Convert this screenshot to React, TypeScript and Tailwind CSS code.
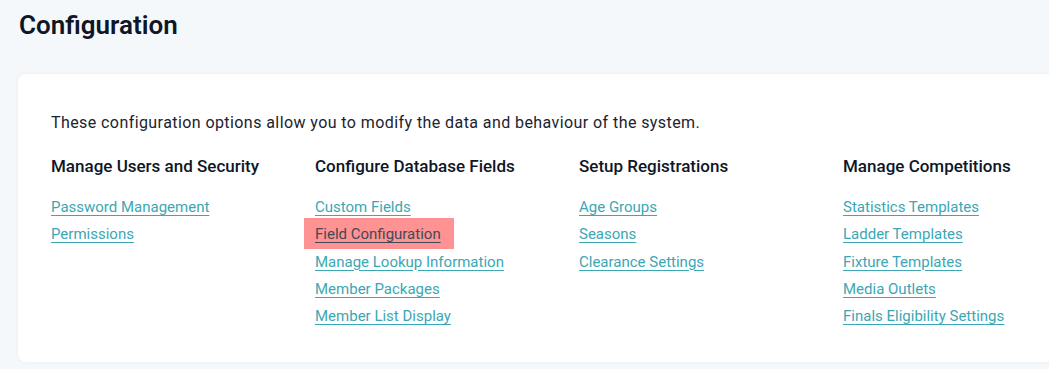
const columns = [
  {
    title: "Manage Users and Security",
    links: ["Password Management", "Permissions"],
  },
  {
    title: "Configure Database Fields",
    links: [
      "Custom Fields",
      "Field Configuration",
      "Manage Lookup Information",
      "Member Packages",
      "Member List Display",
    ],
  },
  {
    title: "Setup Registrations",
    links: ["Age Groups", "Seasons", "Clearance Settings"],
  },
  {
    title: "Manage Competitions",
    links: [
      "Statistics Templates",
      "Ladder Templates",
      "Fixture Templates",
      "Media Outlets",
      "Finals Eligibility Settings",
    ],
  },
];

export default function App() {
  return (
    <div className="h-[369px] w-[1049px] overflow-hidden bg-[#f5f8fb] font-['Roboto',sans-serif]">
      <h1 className="px-[19px] pt-[10px] text-[26px] font-semibold leading-[30px] text-[#0e1627]">
        Configuration
      </h1>
      <div className="ml-[18px] mt-[34px] w-[1060px] rounded-lg bg-white pb-[31px] pl-[33px] pt-[39px] shadow-[0_0_4px_rgba(30,60,90,0.05)]">
        <p className="text-[16px] leading-[20px] tracking-[0.42px] text-[#1b2230]">
          These configuration options allow you to modify the data and behaviour of the system.
        </p>
        <div className="mt-[22px] grid grid-cols-[264px_264px_264px_264px]">
          {columns.map((col) => (
            <div key={col.title}>
              <h2 className="text-[17px] font-medium leading-[22px] text-[#0e1627]">{col.title}</h2>
              <ul className="mt-[18px] flex flex-col">
                {col.links.map((l) => (
                  <li key={l} className="h-[27.25px]">
                    {l === "Field Configuration" ? (
                      <a className="-ml-[11px] -mt-[6px] inline-block bg-[#ff9292] pl-[11px] pr-[13px] pt-[6px] pb-[5px] text-[15px] leading-[20px] text-[#3f4a55] underline underline-offset-[3px]">
                        {l}
                      </a>
                    ) : (
                      <a className="text-[15px] leading-[20px] text-[#3ba7b4] underline underline-offset-[3px]">
                        {l}
                      </a>
                    )}
                  </li>
                ))}
              </ul>
            </div>
          ))}
        </div>
      </div>
    </div>
  );
}
